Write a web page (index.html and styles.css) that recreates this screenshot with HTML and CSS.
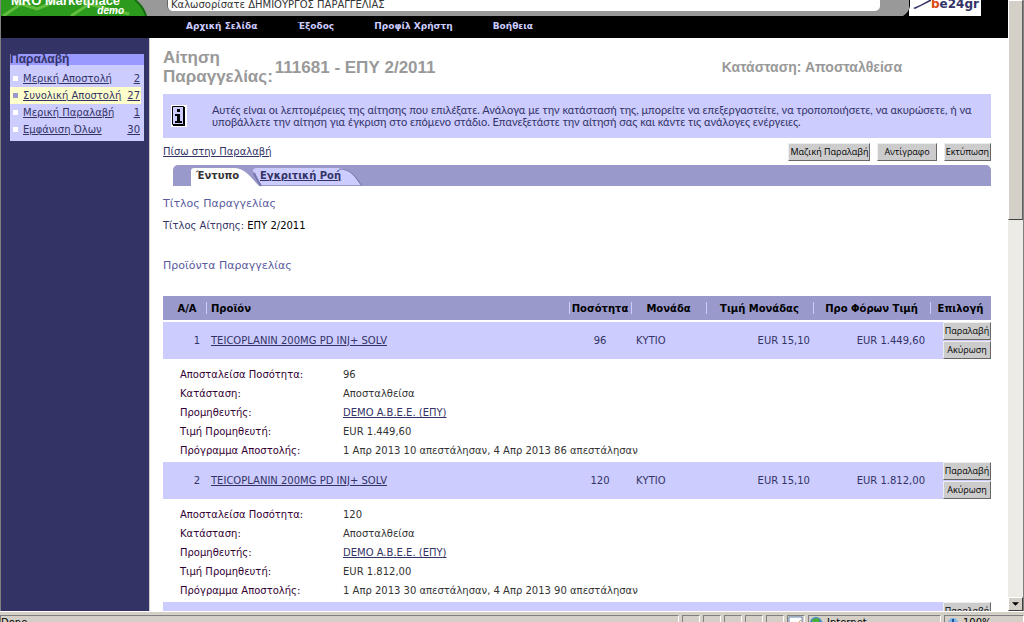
FILE: index.html
```html
<!DOCTYPE html>
<html lang="el">
<head>
<meta charset="utf-8">
<title>MRO Marketplace</title>
<link rel="stylesheet" href="styles.css">
</head>
<body>
<div class="window">
  <div class="viewport">
    <div class="page">
      <header class="banner">
        <div class="logo">
          <svg class="logo-art" viewBox="0 0 148 16" preserveAspectRatio="none" aria-hidden="true">
            <path d="M0 0H135Q143 6 146 16H0Z" fill="#2c9a1c"/>
            <path d="M2 16L20 4L36 9L58 0M70 16L88 4L128 14M20 4L14 0M88 4L84 0" stroke="#62bd3e" stroke-width="3" fill="none"/>
            <path d="M134 0Q142 6 145 16" stroke="#176c12" stroke-width="2" fill="none"/>
          </svg>
          <strong class="logo-name">MRO Marketplace</strong>
          <em class="logo-demo">demo</em>
        </div>
        <div class="welcome">Καλωσορίσατε ΔΗΜΙΟΥΡΓΟΣ ΠΑΡΑΓΓΕΛΙΑΣ</div>
        <div class="partner">
          <svg class="partner-swoosh" viewBox="0 0 22 20" aria-hidden="true"><path d="M0 0H1V10Q0 16 -6 20H0Z" fill="#000"/><path d="M4 12Q12 9 22 3V5L6 13Z" fill="#333366"/></svg>
          <strong><span class="partner-b">b</span>e24gr</strong>
        </div>
      </header>
      <nav class="nav">
        <a href="#">Αρχική Σελίδα</a>
        <a href="#">Έξοδος</a>
        <a href="#">Προφίλ Χρήστη</a>
        <a href="#">Βοήθεια</a>
      </nav>
      <div class="body">
        <aside class="sidebar">
          <section class="box">
            <h2>Παραλαβή</h2>
            <ul>
              <li><a href="#">Μερική Αποστολή</a><a href="#">2</a></li>
              <li class="current"><a href="#">Συνολική Αποστολή</a><a href="#">27</a></li>
              <li><a href="#">Μερική Παραλαβή</a><a href="#">1</a></li>
              <li><a href="#">Εμφάνιση Όλων</a><a href="#">30</a></li>
            </ul>
          </section>
        </aside>
        <main class="main">
          <div class="title">
            <h1><span>Αίτηση<br>Παραγγελίας:</span><span>111681 - ΕΠΥ 2/2011</span></h1>
            <p class="state">Κατάσταση: Αποσταλθείσα</p>
          </div>
          <div class="info">
            <svg class="info-icon" viewBox="0 0 16 22" aria-hidden="true">
              <rect width="16" height="22" fill="#fff"/>
              <path d="M1.5 1.5H12.5V19.5H1.5Z" fill="#ccccff" stroke="#000"/>
              <path d="M13 2H14V21H2V20H13Z" fill="#000"/>
              <path d="M6 4H9V7H6ZM4 9H9V16H11V18H4V16H6V11H4Z" fill="#000"/>
            </svg>
            <p>Αυτές είναι οι λεπτομέρειες της αίτησης που επιλέξατε. Ανάλογα με την κατάστασή της, μπορείτε να επεξεργαστείτε, να τροποποιήσετε, να ακυρώσετε, ή να<br>υποβάλλετε την αίτηση για έγκριση στο επόμενο στάδιο. Επανεξετάστε την αίτησή σας και κάντε τις ανάλογες ενέργειες.</p>
          </div>
          <div class="actions">
            <a href="#">Πίσω στην Παραλαβή</a>
            <div class="action-buttons">
              <button class="btn">Μαζική Παραλαβή</button>
              <button class="btn wide">Αντίγραφο</button>
              <button class="btn">Εκτύπωση</button>
            </div>
          </div>
          <div class="tabs">
            <a class="tab active" href="#">
              <svg viewBox="0 0 68 18" preserveAspectRatio="none" aria-hidden="true"><path d="M0 18V3Q0 0 3 0H42C55 0 60 10 68 18Z" fill="#fff"/></svg>
              <span>Έντυπο</span>
            </a>
            <a class="tab" href="#">
              <svg viewBox="0 0 108 18" preserveAspectRatio="none" aria-hidden="true"><path d="M6 17Q0 6 -2 3Q-2 0 2 0H82C96 0 99 9 106 17Z" fill="#ccccff"/><path d="M84 1C97 1 101 10 107 18" fill="none" stroke="#77a" stroke-width="1"/><path d="M-1 5Q2 12 6 18" fill="none" stroke="#77a" stroke-width="2"/></svg>
              <span>Εγκριτική Ροή</span>
            </a>
          </div>
          <h3>Τίτλος Παραγγελίας</h3>
          <p class="field"><span>Τίτλος Αίτησης:</span> ΕΠΥ 2/2011</p>
          <h3>Προϊόντα Παραγγελίας</h3>
          <table class="products">
            <colgroup><col class="c-no"><col><col class="c-qty"><col class="c-unit"><col class="c-price"><col class="c-total"><col class="c-pick"></colgroup>
            <thead>
              <tr><th>Α/Α</th><th>Προϊόν</th><th>Ποσότητα</th><th>Μονάδα</th><th>Τιμή Μονάδας</th><th>Προ Φόρων Τιμή</th><th>Επιλογή</th></tr>
            </thead>
            <tbody>
              <tr class="item">
                <td>1</td><td><a href="#">TEICOPLANIN 200MG PD INJ+ SOLV</a></td><td>96</td><td>ΚΥΤΙΟ</td><td>EUR 15,10</td><td>EUR 1.449,60</td>
                <td><div class="pick"><button class="btn">Παραλαβή</button><button class="btn">Ακύρωση</button></div></td>
              </tr>
              <tr class="details"><td colspan="7">
                <dl>
                  <dt>Αποσταλείσα Ποσότητα:</dt><dd>96</dd>
                  <dt>Κατάσταση:</dt><dd>Αποσταλθείσα</dd>
                  <dt>Προμηθευτής:</dt><dd><a href="#">DEMO A.B.E.E. (ΕΠΥ)</a></dd>
                  <dt>Τιμή Προμηθευτή:</dt><dd>EUR 1.449,60</dd>
                  <dt>Πρόγραμμα Αποστολής:</dt><dd>1 Απρ 2013 10 απεστάλησαν, 4 Απρ 2013 86 απεστάλησαν</dd>
                </dl>
              </td></tr>
              <tr class="item">
                <td>2</td><td><a href="#">TEICOPLANIN 200MG PD INJ+ SOLV</a></td><td>120</td><td>ΚΥΤΙΟ</td><td>EUR 15,10</td><td>EUR 1.812,00</td>
                <td><div class="pick"><button class="btn">Παραλαβή</button><button class="btn">Ακύρωση</button></div></td>
              </tr>
              <tr class="details"><td colspan="7">
                <dl>
                  <dt>Αποσταλείσα Ποσότητα:</dt><dd>120</dd>
                  <dt>Κατάσταση:</dt><dd>Αποσταλθείσα</dd>
                  <dt>Προμηθευτής:</dt><dd><a href="#">DEMO A.B.E.E. (ΕΠΥ)</a></dd>
                  <dt>Τιμή Προμηθευτή:</dt><dd>EUR 1.812,00</dd>
                  <dt>Πρόγραμμα Αποστολής:</dt><dd>1 Απρ 2013 30 απεστάλησαν, 4 Απρ 2013 90 απεστάλησαν</dd>
                </dl>
              </td></tr>
              <tr class="item">
                <td></td><td></td><td></td><td></td><td></td><td></td>
                <td><div class="pick"><button class="btn">Παραλαβή</button><button class="btn">Ακύρωση</button></div></td>
              </tr>
            </tbody>
          </table>
        </main>
      </div>
    </div>
    <div class="scrollbar">
      <div class="thumb"></div>
      <button class="scroll-down" aria-label="Scroll down"><svg viewBox="0 0 8 4" aria-hidden="true"><path d="M0 0H8L4 4Z"/></svg></button>
    </div>
  </div>
  <footer class="status">
    <span class="pane message">Done</span>
    <span class="pane small"></span><span class="pane small"></span><span class="pane small"></span><span class="pane small"></span><span class="pane small"></span>
    <span class="pane small"><svg viewBox="0 0 15 12" aria-hidden="true"><path d="M1 1H14V12H1Z" fill="#fff" stroke="#6b87b5"/><path d="M8 9L13 4" stroke="#c9a34a"/></svg></span>
    <span class="pane zone"><svg viewBox="0 0 15 12" aria-hidden="true"><circle cx="7" cy="7" r="6" fill="#3a86c8"/><path d="M3 4Q8 0 11 4L8 8L4 12Z" fill="#4caf3c"/></svg>Internet</span>
    <span class="pane zoom"><svg viewBox="0 0 15 12" aria-hidden="true"><circle cx="8" cy="7" r="5" fill="#7db4e8"/><path d="M8 3V11M4 7H12" stroke="#1d4f9c" stroke-width="2"/></svg>100%</span>
  </footer>
</div>
</body>
</html>
```
FILE: styles.css
```css
* { box-sizing: border-box; }
body {
  margin: 0;
  background: #fff;
  color: #333;
  font: 10px/12px "DejaVu Sans", Verdana, sans-serif;
}
h1, h2, h3, p, ul, dl, dd { margin: 0; padding: 0; }
a { color: #333366; }
.window { display: flex; flex-direction: column; height: 100vh; overflow: hidden; }
.viewport { display: flex; flex: 1; min-height: 0; border-left: 1px solid #808080; }
.page { display: flex; flex-direction: column; flex: 1; min-width: 0; overflow: hidden; }

.banner {
  display: flex;
  align-items: flex-start;
  flex: none;
  height: 16px;
  background: #999;
}
.logo { position: relative; width: 148px; height: 16px; font-family: "Liberation Sans", Arial, sans-serif; color: #fff; }
.logo-art { position: absolute; inset: 0; width: 148px; height: 16px; }
.logo-name { position: absolute; left: 10px; bottom: 9px; font-size: 13px; line-height: 12px; white-space: nowrap; }
.logo-demo { position: absolute; right: 25px; bottom: 0; font-size: 10px; line-height: 10px; font-weight: bold; }
.welcome {
  width: 713px;
  height: 11px;
  margin: 0 auto 0 18px;
  padding-left: 3px;
  background: #fff;
  border-left: 1px solid #666;
  border-radius: 0 0 5px 5px;
  line-height: 9px;
}
.partner {
  display: flex;
  flex: none;
  width: 99px;
  height: 16px;
  border-right: 27px solid #000;
  background: #fff;
  color: #333366;
  font: 12px/9px "DejaVu Sans", sans-serif;
}
.partner-swoosh { flex: none; width: 22px; height: 20px; margin-top: -4px; overflow: visible; }
.partner-b { color: #dd4a12; }

.nav {
  display: flex;
  gap: 40px;
  flex: none;
  height: 22px;
  padding-left: 185px;
  background: #000;
  line-height: 20px;
}
.nav a { color: #ccccff; font-size: 9px; font-weight: bold; text-decoration: none; }

.body { display: flex; flex: 1; min-height: 0; }
.sidebar { flex: none; width: 149px; padding: 16px 5px 0 9px; background: #333366; border-right: 1px solid #ccc; }
.box { background: #ccccff; padding-bottom: 3px; }
.box h2 {
  height: 11px;
  background: #9999ff;
  color: #333366;
  font: bold 12px/11px "Liberation Sans", Arial, sans-serif;
}
.box ul { list-style: none; padding: 5px 3px 0 0; }
.box li { display: flex; justify-content: space-between; align-items: center; height: 17px; padding-right: 1px; }
.box li::before { content: ""; width: 5px; height: 5px; margin: 0 5px 0 3px; background: #fff; }
.box li a:first-of-type { margin-right: auto; }
.box .current { background: #ffffcc; }
.box .current::before { background: #9999cc; }

.main { flex: 1; min-width: 0; padding: 9px 17px 0 13px; }
.title { display: flex; justify-content: space-between; align-items: center; height: 40px; padding-right: 89px; color: #999; font: bold 17px/19px "Liberation Sans", Arial, sans-serif; }
.title h1 { display: flex; align-items: center; gap: 2px; font: inherit; }
.title .state { font-size: 14px; line-height: 17px; }
.info {
  display: flex;
  align-items: center;
  gap: 25px;
  height: 44px;
  margin-top: 7px;
  padding-left: 8px;
  background: #ccccff;
  color: #333366;
  font-family: Lato, sans-serif;
  font-size: 11px;
  white-space: nowrap;
}
.info-icon { flex: none; width: 16px; height: 22px; }
.actions { display: flex; justify-content: space-between; align-items: center; height: 27px; }
.action-buttons { display: flex; gap: 7px; }
.btn {
  height: 18px;
  padding: 0 1px;
  background: #ccc;
  border: 1px solid;
  border-color: #eee #666 #666 #eee;
  color: #000;
  font: 9px/14px "Open Sans", "Noto Sans", sans-serif;
  white-space: nowrap;
}
.btn.wide { padding: 0 6px; }
.tabs {
  display: flex;
  align-items: flex-end;
  height: 21px;
  margin-left: 10px;
  padding-left: 18px;
  background: #9999cc;
  border-radius: 5px 5px 0 0;
}
.tab { position: relative; width: 104px; height: 18px; padding-left: 5px; color: #333366; font-weight: bold; line-height: 15px; }
.tab.active { width: 64px; color: #333; text-decoration: none; }
.tab svg { position: absolute; left: 0; top: 0; width: 108px; height: 18px; overflow: visible; }
.tab.active svg { width: 68px; }
.tab span { position: relative; }
h3 { margin-top: 10px; color: #5a5a9c; font-size: 11px; line-height: 16px; font-weight: normal; }
.field { margin: 8px 0 26px; line-height: 12px; color: #000; }
.field span { color: #333366; }
.field + h3 { margin-bottom: 22px; }

.products { width: 100%; table-layout: fixed; border-collapse: collapse; }
.products td, .products th { padding: 0; }
.c-no { width: 43px; }
.c-qty { width: 62px; }
.c-unit { width: 75px; }
.c-price { width: 107px; }
.c-total { width: 117px; }
.c-pick { width: 61px; }
.products thead { border-bottom: 2px solid #fff; }
.products th { position: relative; height: 25px; padding-top: 1px; background: #9999cc; color: #000; font-weight: bold; white-space: nowrap; }
.products th + th::before { content: ""; position: absolute; left: 0; top: 6px; width: 1px; height: 12px; background: #ccccff; }
.products th:first-child { padding-left: 5px; }
.products th:nth-child(2) { padding-left: 5px; text-align: left; }
.item td { height: 37px; background: #ccccff; color: #333366; }
.item td:nth-child(1) { padding-right: 6px; text-align: right; }
.item td:nth-child(2) { padding-left: 5px; }
.item td:nth-child(3) { text-align: center; }
.item td:nth-child(4) { padding-left: 5px; }
.item td:nth-child(5) { padding-right: 3px; text-align: right; }
.item td:nth-child(6) { padding-right: 5px; text-align: right; }
.pick { display: flex; flex-direction: column; gap: 1px; margin-left: 13px; }
.pick .btn { width: 48px; padding: 0; }
.details dl { display: grid; grid-template-columns: 163px 1fr; padding: 6px 0 2px 17px; line-height: 19px; }
.details dt { color: #330033; }

.scrollbar {
  display: flex;
  flex-direction: column;
  justify-content: space-between;
  flex: none;
  width: 16px;
  background: #edebe5;
  border-right: 1px solid #808080;
}
.thumb { height: 220px; background: #d4d0c8; border: 1px solid; border-color: #fff #606060 #404040 #fff; }
.scroll-down { display: flex; align-items: center; justify-content: center; height: 14px; padding: 0; background: #d4d0c8; border: 1px solid; border-color: #fff #404040 #404040 #fff; }
.scroll-down svg { width: 7px; height: 4px; }

.status {
  display: flex;
  gap: 3px;
  flex: none;
  height: 11px;
  padding-top: 3px;
  overflow: hidden;
  background: #d4d0c8;
  border-top: 1px solid #fff;
  color: #000;
  font: 10px/14px "DejaVu Sans", sans-serif;
}
.pane { display: flex; gap: 3px; height: 14px; border-left: 1px solid #808080; border-top: 1px solid #808080; border-right: 1px solid #fff; }
.pane svg { flex: none; width: 15px; height: 12px; }
.message { flex: 1; }
.small { width: 18px; }
.zone { width: 133px; }
.zoom { width: 80px; }
```
